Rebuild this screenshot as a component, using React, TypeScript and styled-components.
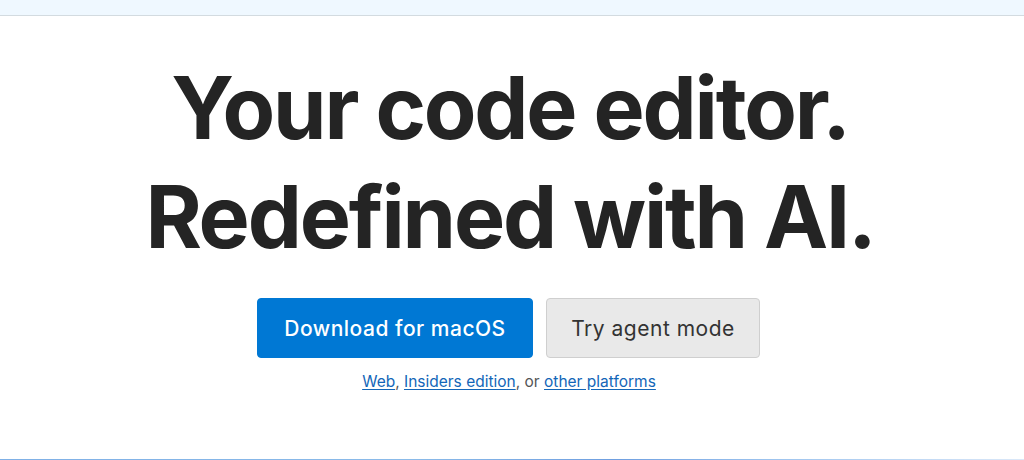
import React from "react";
import styled, { createGlobalStyle } from "styled-components";

const Global = createGlobalStyle`
  html, body { margin: 0; padding: 0; background: #ffffff; }
  body { font-family: Inter, "Noto Sans", "Liberation Sans", sans-serif; width: 1024px; height: 460px; overflow: hidden; }
  #root { width: 1024px; height: 460px; }
`;

const Page = styled.div`
  display: flex;
  flex-direction: column;
  width: 1024px;
  height: 460px;
`;

const TopBar = styled.div`
  height: 15px;
  flex: none;
  background: #eff8ff;
  border-bottom: 1px solid #d3dbe0;
`;

const Hero = styled.main`
  flex: 1;
  display: flex;
  flex-direction: column;
  align-items: center;
  padding: 38px 4px 0 0;
`;

const Title = styled.h1`
  margin: 0;
  font-size: 86px;
  line-height: 109px;
  font-weight: 700;
  letter-spacing: -2.2px;
  color: #242424;
  text-align: center;
`;

const Actions = styled.div`
  display: flex;
  gap: 13px;
  margin: 26px 3px 0 0;
`;

const Button = styled.a<{ $primary?: boolean }>`
  display: flex;
  align-items: center;
  justify-content: center;
  box-sizing: border-box;
  height: 60px;
  width: ${(p) => (p.$primary ? "276px" : "214px")};
  border-radius: 4px;
  font-size: 21px;
  letter-spacing: 0.5px;
  font-weight: ${(p) => (p.$primary ? 500 : 400)};
  text-decoration: none;
  background: ${(p) => (p.$primary ? "#0078d4" : "#e9e9e9")};
  color: ${(p) => (p.$primary ? "#ffffff" : "#333333")};
  border: 1px solid ${(p) => (p.$primary ? "#0078d4" : "#cfcfcf")};
`;

const Alt = styled.p`
  margin: 14px 2px 0 0;
  font-size: 15.5px;
  color: #555555;
`;

const Link = styled.a`
  color: #1366b8;
  text-decoration: underline;
  text-underline-offset: 2px;
`;

const BottomLine = styled.div`
  height: 1px;
  flex: none;
  background: linear-gradient(90deg, #7fb0e6 0%, #8bbbe9 40%, #6f9fe0 60%, #9cc3ee 75%, #dbe8f8 100%);
`;

export default function App() {
  return (
    <>
      <Global />
      <Page>
        <TopBar />
        <Hero>
          <Title>
            Your code editor.
            <br />
            Redefined with AI.
          </Title>
          <Actions>
            <Button $primary href="#">Download for macOS</Button>
            <Button href="#">Try agent mode</Button>
          </Actions>
          <Alt>
            <Link href="#">Web</Link>, <Link href="#">Insiders edition</Link>, or{" "}
            <Link href="#">other platforms</Link>
          </Alt>
        </Hero>
        <BottomLine />
      </Page>
    </>
  );
}
